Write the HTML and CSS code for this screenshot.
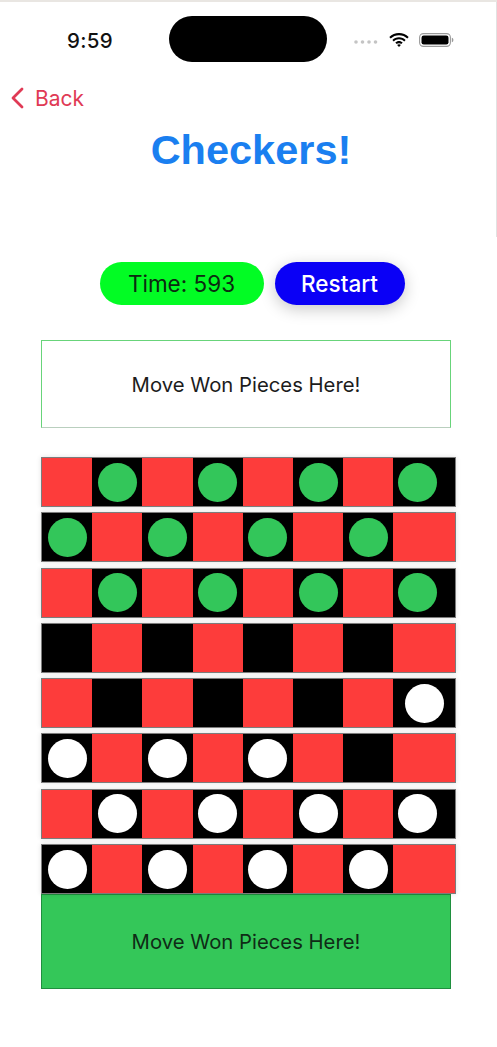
FILE: index.html
```html
<!DOCTYPE html>
<html>
<head>
<meta charset="utf-8">
<link rel="stylesheet" href="styles.css">
</head>
<body>
<div class="screen">
  <div class="header">
    <div class="status">
      <span class="clock">9:59</span>
      <div class="island"></div>
      <div class="status-icons">
        <svg class="dots" width="26" height="6" viewBox="0 0 26 6"><circle cx="2" cy="3" r="1.8"/><circle cx="8.5" cy="3" r="1.8"/><circle cx="15" cy="3" r="1.8"/><circle cx="21.5" cy="3" r="1.8"/></svg>
        <svg class="wifi" width="20" height="14" viewBox="0 0 20 14"><path d="M10 2.2c3.2 0 6.1 1.2 8.3 3.3l1.4-1.5C17.1 1.5 13.7 0 10 0S2.9 1.5.3 4l1.4 1.5C3.9 3.4 6.8 2.2 10 2.2z"/><path d="M10 6.3c2 0 3.8.8 5.2 2.1l1.4-1.5C14.9 5.2 12.6 4.2 10 4.2S5.1 5.2 3.4 6.9l1.4 1.5C6.2 7.1 8 6.3 10 6.3z"/><path d="M10 10.2c.9 0 1.7.4 2.3.9l1.4-1.5c-1-.9-2.3-1.5-3.7-1.5s-2.7.6-3.7 1.5l1.4 1.5c.6-.5 1.4-.9 2.3-.9z"/><path d="M10 14l1.9-2c-.5-.4-1.2-.7-1.9-.7s-1.4.3-1.9.7z"/></svg>
        <svg class="battery" width="35" height="14" viewBox="0 0 35 14"><rect x="0.6" y="0.6" width="30.8" height="12.8" rx="3.8" fill="none" stroke="#9a9a9a" stroke-width="1.1"/><rect x="2.5" y="2.5" width="27" height="9" rx="2.2" fill="#000"/><path d="M32.8 4.8c1 .3 1.6 1.1 1.6 2.2s-.6 1.9-1.6 2.2z" fill="#9a9a9a"/></svg>
      </div>
    </div>
    <div class="nav">
      <a class="back" href="#">
        <svg class="chev" width="16" height="22" viewBox="0 0 16 22"><path d="M13 2 L4 11 L13 20" fill="none" stroke="#e03a55" stroke-width="2.8" stroke-linecap="round" stroke-linejoin="round"/></svg>
        <span>Back</span>
      </a>
    </div>
    <h1 class="title">Checkers!</h1>
  </div>

  <div class="controls">
    <div class="pill time">Time: 593</div>
    <div class="pill restart">Restart</div>
  </div>

  <div class="won won-top">Move Won Pieces Here!</div>

  <div class="board">
    <div class="row">
      <div class="cell r"></div><div class="cell b"><i class="pc g"></i></div><div class="cell r"></div><div class="cell b"><i class="pc g"></i></div><div class="cell r"></div><div class="cell b"><i class="pc g"></i></div><div class="cell r"></div><div class="cell b last start"><i class="pc g"></i></div>
    </div>
    <div class="row">
      <div class="cell b"><i class="pc g"></i></div><div class="cell r"></div><div class="cell b"><i class="pc g"></i></div><div class="cell r"></div><div class="cell b"><i class="pc g"></i></div><div class="cell r"></div><div class="cell b"><i class="pc g"></i></div><div class="cell r last"></div>
    </div>
    <div class="row">
      <div class="cell r"></div><div class="cell b"><i class="pc g"></i></div><div class="cell r"></div><div class="cell b"><i class="pc g"></i></div><div class="cell r"></div><div class="cell b"><i class="pc g"></i></div><div class="cell r"></div><div class="cell b last start"><i class="pc g"></i></div>
    </div>
    <div class="row">
      <div class="cell b"></div><div class="cell r"></div><div class="cell b"></div><div class="cell r"></div><div class="cell b"></div><div class="cell r"></div><div class="cell b"></div><div class="cell r last"></div>
    </div>
    <div class="row">
      <div class="cell r"></div><div class="cell b"></div><div class="cell r"></div><div class="cell b"></div><div class="cell r"></div><div class="cell b"></div><div class="cell r"></div><div class="cell b last"><i class="pc w"></i></div>
    </div>
    <div class="row">
      <div class="cell b"><i class="pc w"></i></div><div class="cell r"></div><div class="cell b"><i class="pc w"></i></div><div class="cell r"></div><div class="cell b"><i class="pc w"></i></div><div class="cell r"></div><div class="cell b"></div><div class="cell r last"></div>
    </div>
    <div class="row">
      <div class="cell r"></div><div class="cell b"><i class="pc w"></i></div><div class="cell r"></div><div class="cell b"><i class="pc w"></i></div><div class="cell r"></div><div class="cell b"><i class="pc w"></i></div><div class="cell r"></div><div class="cell b last start"><i class="pc w"></i></div>
    </div>
    <div class="row">
      <div class="cell b"><i class="pc w"></i></div><div class="cell r"></div><div class="cell b"><i class="pc w"></i></div><div class="cell r"></div><div class="cell b"><i class="pc w"></i></div><div class="cell r"></div><div class="cell b"><i class="pc w"></i></div><div class="cell r last"></div>
    </div>
  </div>

  <div class="won won-bottom">Move Won Pieces Here!</div>
</div>
</body>
</html>
```

FILE: styles.css
```css
* { box-sizing: border-box; }
html, body { margin: 0; padding: 0; background: #fff; }
body { font-family: Inter, "Noto Sans", sans-serif; color: #111; }
.screen { width: 497px; height: 1047px; overflow: hidden; border-top: 2px solid #e9e6e2; }

.header { height: 235px; border-right: 1px solid #e2e2e2; }

.status { position: relative; height: 78px; display: flex; align-items: center; padding-left: 67px; padding-right: 42px; padding-bottom: 2px; }
.clock { font-size: 20.5px; font-weight: 500; letter-spacing: 0.3px; color: #111; }
.island { position: absolute; left: 169px; top: 14px; width: 158px; height: 46px; border-radius: 23px; background: #000; }
.status-icons { margin-left: auto; display: flex; align-items: center; gap: 0; }
.dots { fill: #c4c4c4; margin-right: 9px; margin-top: 3px; }
.wifi { fill: #000; margin-right: 10px; }

.nav { height: 36px; display: flex; align-items: center; padding-left: 9px; }
.back { display: flex; align-items: center; text-decoration: none; color: #e03a55; font-size: 21px; }
.back span { margin-left: 10px; }

.title { margin: 0; padding-top: 6px; padding-left: 6px; text-align: center; font-family: "Liberation Sans", Arial, sans-serif; font-weight: 700; font-size: 41.5px; line-height: 56px; color: #1a7ff0; }

.controls { display: flex; justify-content: center; gap: 11px; margin-top: 25px; padding-left: 7px; }
.pill { height: 43px; border-radius: 22px; display: flex; align-items: center; justify-content: center; font-size: 22.5px; }
.time { width: 164px; background: #02fc24; color: #0c2a10; }
.restart { width: 130px; background: #0a00f6; color: #fff; font-weight: 450; box-shadow: 0 4px 16px rgba(0,0,0,0.22); }

.won { width: 410px; margin-left: 41px; display: flex; align-items: center; justify-content: center; font-size: 20.3px; color: #1c1c1c; }
.won-top { height: 88px; margin-top: 35px; border: 1px solid #68d47a; border-bottom-color: #b9cfbe; }
.won-bottom { height: 95px; background: #34c759; border: 1px solid #1f8f3e; color: #0f2b16; }

.board { margin-top: 29px; margin-left: 41px; width: 415px; display: flex; flex-direction: column; gap: 5.3px; }
.row { display: flex; height: 50px; border: 1px solid #7c7c7c; box-shadow: 0 0 5px rgba(0,0,0,0.12); }
.cell { width: 50.2px; flex: none; display: flex; align-items: center; justify-content: center; }
.cell.last { flex: 1; }
.cell.start { justify-content: flex-start; padding-left: 5px; }
.r { background: #fd3c3b; }
.b { background: #000; }
.pc { display: block; width: 39px; height: 39px; border-radius: 50%; box-shadow: 0 0 5px rgba(0,0,0,0.35); }
.pc.g { background: #33c65a; }
.pc.w { background: #fff; }
```
